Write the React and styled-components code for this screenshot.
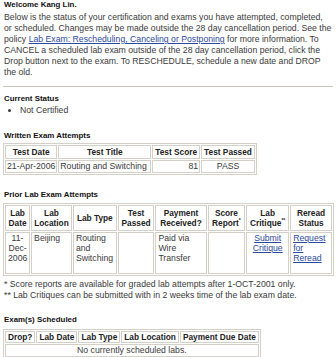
import React from "react";
import styled, { createGlobalStyle } from "styled-components";

const Global = createGlobalStyle`
  body {
    margin: 0;
    background: #fff;
    font-family: "Liberation Sans", Arial, sans-serif;
    color: #3a3a3a;
  }
`;

const Page = styled.div`
  width: 336px;
  padding: 0 0 0 4px;
  box-sizing: border-box;
  font-size: 8.7px;
  line-height: 11px;
`;

const Title = styled.div`
  font-weight: bold;
  font-size: 7.9px;
  line-height: 10px;
  color: #111;
  margin-top: ${(p) => p.$top || 0}px;
  margin-bottom: ${(p) => p.$gap || 0}px;
`;

const Intro = styled.p`
  margin: 2px 0 0;
  white-space: nowrap;
`;

const Link = styled.a`
  color: #2c4a9e;
  text-decoration: underline;
`;

const Rule = styled.hr`
  border: 0;
  border-top: 1px solid #c8c4bc;
  margin: 8px 3px 7px -1px;
`;

const Bullets = styled.ul`
  margin: 0;
  padding: 0 0 0 16px;
  li {
    line-height: 11px;
    margin-top: 1px;
  }
`;

const Table = styled.table`
  border: 1px solid #d4d0c8;
  border-spacing: 1px;
  margin-left: -1px;
  width: ${(p) => p.$width || "auto"};
  table-layout: ${(p) => (p.$fixed ? "fixed" : "auto")};
  th, td {
    border: 1px solid #d4d0c8;
    padding: ${(p) => (p.$fixed ? "0 2px" : "0 1px")};
  }
  th {
    font-size: 8.3px;
    line-height: ${(p) => p.$headLine || 12}px;
    font-weight: bold;
    color: #222;
    white-space: ${(p) => (p.$fixed ? "normal" : "nowrap")};
    padding: ${(p) => (p.$fixed ? "2px 1px" : "0 2px")};
  }
  td {
    vertical-align: top;
    line-height: ${(p) => p.$bodyLine || 11}px;
    white-space: ${(p) => (p.$fixed ? "normal" : "nowrap")};
  }
`;

const Col = styled.col`
  width: ${(p) => p.$w}px;
`;

const Cell = styled.td`
  text-align: ${(p) => p.$align || "left"};
  height: ${(p) => (p.$tall ? "40px" : "auto")};
`;

const Star = styled.sup`
  font-size: 5px;
  line-height: 0;
`;

const Note = styled.div`
  margin-top: ${(p) => p.$top || 0}px;
`;

export default function App() {
  return (
    <Page>
      <Global />
      <Title>Welcome Kang Lin.</Title>
      <Intro>
        Below is the status of your certification and exams you have attempted, completed,<br />
        or scheduled. Changes may be made outside the 28 day cancellation period. See the<br />
        policy <Link href="#">Lab Exam: Rescheduling, Canceling or Postponing</Link> for more information. To<br />
        CANCEL a scheduled lab exam outside of the 28 day cancellation period, click the<br />
        Drop button next to the exam. To RESCHEDULE, schedule a new date and DROP<br />
        the old.
      </Intro>
      <Rule />
      <Title>Current Status</Title>
      <Bullets>
        <li>Not Certified</li>
      </Bullets>

      <Title $top={15} $gap={2}>Written Exam Attempts</Title>
      <Table>
        <thead>
          <tr>
            <th>Test Date</th>
            <th style={{ width: 87 }}>Test Title</th>
            <th>Test Score</th>
            <th>Test Passed</th>
          </tr>
        </thead>
        <tbody>
          <tr>
            <Cell>21-Apr-2006</Cell>
            <Cell>Routing and Switching</Cell>
            <Cell $align="right">81</Cell>
            <Cell $align="center">PASS</Cell>
          </tr>
        </tbody>
      </Table>

      <Title $top={15} $gap={3}>Prior Lab Exam Attempts</Title>
      <Table $width="331px" $fixed $headLine={10} $bodyLine={10}>
        <colgroup>
          <Col $w={24} />
          <Col $w={39} />
          <Col $w={42} />
          <Col $w={35} />
          <Col $w={49} />
          <Col $w={36} />
          <Col $w={41} />
          <Col $w={40} />
        </colgroup>
        <thead>
          <tr>
            <th>Lab Date</th>
            <th>Lab Location</th>
            <th>Lab Type</th>
            <th>Test Passed</th>
            <th>Payment Received?</th>
            <th>Score Report<Star>*</Star></th>
            <th>Lab Critique<Star>**</Star></th>
            <th>Reread Status</th>
          </tr>
        </thead>
        <tbody>
          <tr>
            <Cell $align="center" $tall>11-<br />Dec-<br />2006</Cell>
            <Cell>Beijing</Cell>
            <Cell>Routing and Switching</Cell>
            <Cell></Cell>
            <Cell>Paid via Wire Transfer</Cell>
            <Cell></Cell>
            <Cell $align="center"><Link href="#">Submit Critique</Link></Cell>
            <Cell><Link href="#">Request for Reread</Link></Cell>
          </tr>
        </tbody>
      </Table>
      <Note $top={3}>* Score reports are available for graded lab attempts after 1-OCT-2001 only.</Note>
      <Note>** Lab Critiques can be submitted with in 2 weeks time of the lab exam date.</Note>

      <Title $top={14} $gap={4}>Exam(s) Scheduled</Title>
      <Table $headLine={10}>
        <thead>
          <tr>
            <th>Drop?</th>
            <th>Lab Date</th>
            <th>Lab Type</th>
            <th>Lab Location</th>
            <th>Payment Due Date</th>
          </tr>
        </thead>
        <tbody>
          <tr>
            <Cell colSpan={5} $align="center">No currently scheduled labs.</Cell>
          </tr>
        </tbody>
      </Table>
    </Page>
  );
}
